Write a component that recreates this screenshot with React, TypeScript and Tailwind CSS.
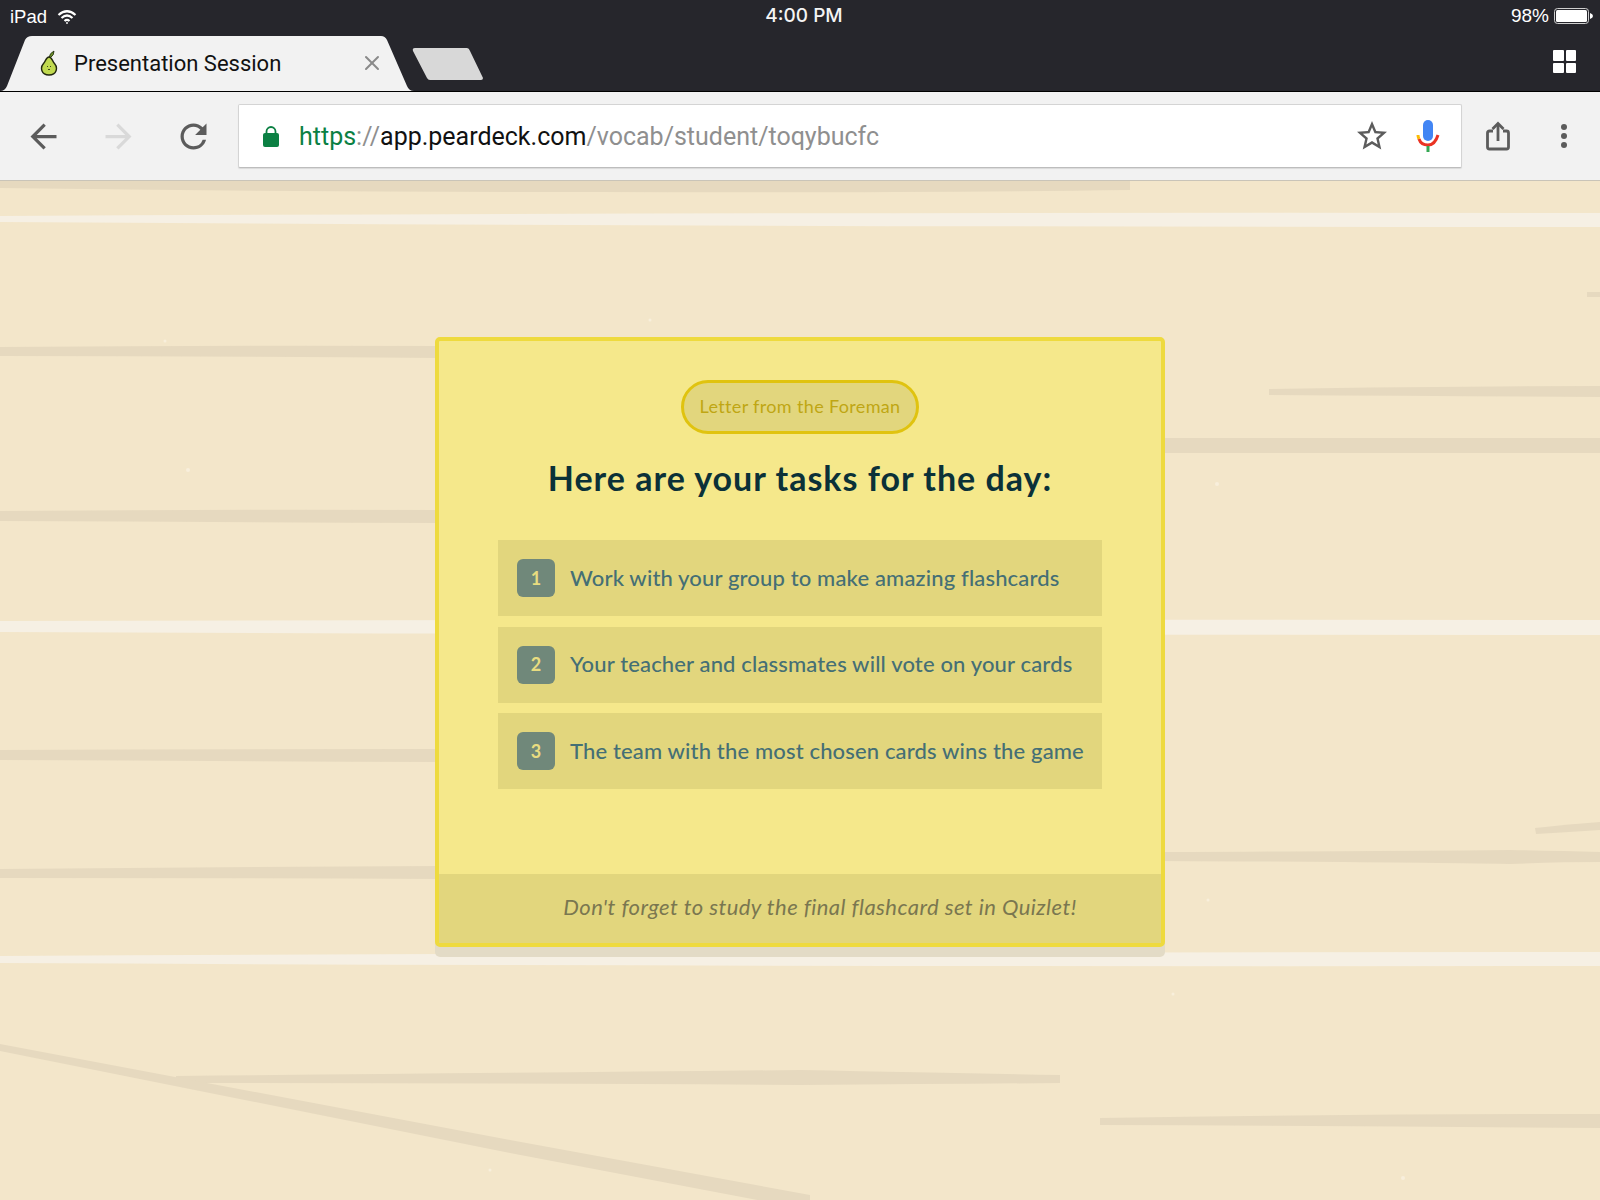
import { X } from 'lucide-react';

const tasks = [
  'Work with your group to make amazing flashcards',
  'Your teacher and classmates will vote on your cards',
  'The team with the most chosen cards wins the game',
];

function WoodBackground() {
  return (
    <svg className="absolute inset-0 w-full h-full" viewBox="0 181 1600 1019" preserveAspectRatio="none">
      {/* dark grain */}
      <g fill="#e6d9bf">
        <path d="M0 181H1130V190Q900 193 600 192Q300 192 0 188Z" />
        <path d="M0 347Q220 345 440 346V358Q220 356 0 356Z" />
        <path d="M0 511Q220 509 440 510V523Q220 522 0 521Z" />
        <path d="M0 750Q220 749 440 749V762Q220 761 0 760Z" />
        <path d="M0 869Q220 867 440 866V879Q220 878 0 878Z" />
        <path d="M1160 438H1600V453H1160Z" />
        <path d="M1269 389Q1450 386 1600 386V397Q1450 396 1269 395Z" />
        <path d="M1312 624Q1450 622 1600 623V632Q1450 632 1312 631Z" />
        <path d="M1587 292H1600V297H1587Z" />
        <path d="M1160 852Q1400 851 1510 850Q1560 851 1600 852V862Q1560 862 1510 864Q1400 862 1160 861Z" />
        <path d="M1535 828Q1570 824 1600 822V830Q1570 832 1536 834Z" />
        <path d="M176 1076Q500 1073 800 1070Q950 1073 1060 1075V1083Q950 1084 800 1085Q500 1083 176 1083Z" />
        <path d="M1100 1118Q1350 1114 1600 1114V1128Q1350 1126 1100 1125Z" />
        <path d="M0 1044L510 1140L810 1195V1210L510 1153L0 1051Z" />
      </g>
      {/* light streaks */}
      <g fill="#f6f0e4">
        <path d="M0 216Q800 212 1600 213V227Q800 227 0 222Z" />
        <path d="M0 621Q800 619 1600 620V635Q800 635 0 632Z" />
        <path d="M0 956Q800 952 1600 952V966Q800 967 0 963Z" />
      </g>
      {/* specks */}
      <g fill="#f8efdc">
        <circle cx="188" cy="470" r="2" />
        <circle cx="165" cy="341" r="1.5" />
        <circle cx="650" cy="320" r="1.5" />
        <circle cx="1217" cy="484" r="2" />
        <circle cx="1208" cy="900" r="1.5" />
        <circle cx="1173" cy="994" r="1.5" />
        <circle cx="1403" cy="1178" r="2" />
        <circle cx="490" cy="1170" r="1.5" />
      </g>
    </svg>
  );
}

function Pear() {
  return (
    <svg width="18" height="26" viewBox="0 0 18 26">
      <path d="M9 8Q9.5 3 14 1Q14.5 5 10 8Z" fill="#6b8f2a" stroke="#1f2a10" strokeWidth="0.8" />
      <path d="M9 7C12 7 12 11 14.5 13.5C18 17.5 17 25 9 25C1 25 0 17.5 3.5 13.5C6 11 6 7 9 7Z" fill="#c0d94f" stroke="#22280f" strokeWidth="1.4" />
      <path d="M7 16.5H8M10 16.5H11M8 19.5H10" stroke="#3d4a1a" strokeWidth="1" />
    </svg>
  );
}

function StatusBar() {
  return (
    <div className="flex items-center justify-between h-[33px] pl-[10px] pr-[6px] font-['Liberation_Sans',sans-serif] text-white text-[18.5px]">
      <div className="flex items-center w-[300px] gap-[10px]">
        <span>iPad</span>
        <svg width="20" height="16" viewBox="0 0 20 16" fill="none" stroke="#fff" strokeWidth="2.2">
          <path d="M1.5 6Q10 -1.5 18.5 6" />
          <path d="M4.5 9Q10 4 15.5 9" />
          <path d="M7.5 12Q10 9.8 12.5 12" />
          <circle cx="10" cy="14" r="0.9" fill="#fff" stroke="none" />
        </svg>
      </div>
      <span className="ml-[4px] font-[Inter,sans-serif] font-medium text-[19px] text-[#f4f4f4]">4:00 PM</span>
      <div className="flex items-center justify-end w-[300px] gap-[5px]">
        <span className="text-[19px]">98%</span>
        <svg width="40" height="17" viewBox="0 0 40 17">
          <rect x="0.5" y="0.5" width="34" height="15" rx="3" fill="none" stroke="#cfcfcf" />
          <rect x="2" y="2" width="31" height="12" rx="1.5" fill="#fff" />
          <path d="M36 5Q39 6 39 8Q39 10 36 11Z" fill="#fff" />
        </svg>
      </div>
    </div>
  );
}

function TabRow() {
  return (
    <div className="flex items-end h-[59px] pr-[24px] border-b border-black">
      <div className="relative flex items-center w-[414px] h-[56px] pl-[40px] pr-[30px]">
        <svg className="absolute inset-0" width="414" height="56" viewBox="0 0 414 56">
          <path d="M0 56Q5 56 7 51L25 5Q27 1 32 1H381Q385 1 387 5L407 51Q409 56 414 56Z" fill="#f2f2f2" />
        </svg>
        <div className="relative flex items-center w-full">
          <Pear />
          <span className="ml-[16px] font-[Roboto,sans-serif] text-[22px] text-[#111]">Presentation Session</span>
          <X className="ml-auto text-[#8a8a8a]" size={24} strokeWidth={2} />
        </div>
      </div>
      <svg className="mb-[11px] -ml-[2px]" width="72" height="32" viewBox="0 0 72 33" preserveAspectRatio="none">
        <path d="M3 0H55Q57 0 58 3L71 31Q71 33 69 33H18Q16 33 15 31L1 3Q0 0 3 0Z" fill="#d8d8d8" />
      </svg>
      <div className="ml-auto mb-[18px] grid grid-cols-2 gap-[2px] w-[23px] h-[23px]">
        <span className="bg-white rounded-[1px]" />
        <span className="bg-white rounded-[1px]" />
        <span className="bg-white rounded-[1px]" />
        <span className="bg-white rounded-[1px]" />
      </div>
    </div>
  );
}

function Toolbar() {
  return (
    <div className="flex items-center h-[89px] bg-[#f2f2f2] border-b border-[#c9c4b8] pl-[24px]">
      <svg width="39" height="39" viewBox="0 0 24 24" fill="#5c5c5c"><path d="M20 11H7.83l5.59-5.59L12 4l-8 8 8 8 1.41-1.41L7.83 13H20v-2z" /></svg>
      <svg className="ml-[36px]" width="39" height="39" viewBox="0 0 24 24" fill="#d9d9d9"><path d="M12 4l-1.41 1.41L16.17 11H4v2h12.17l-5.58 5.59L12 20l8-8z" /></svg>
      <svg className="ml-[36px]" width="39" height="39" viewBox="0 0 24 24" fill="#5c5c5c"><path d="M17.65 6.35A7.958 7.958 0 0 0 12 4c-4.42 0-7.99 3.58-7.99 8s3.57 8 7.99 8c3.73 0 6.84-2.55 7.73-6h-2.08A5.99 5.99 0 0 1 12 18c-3.31 0-6-2.69-6-6s2.69-6 6-6c1.66 0 3.14.69 4.22 1.78L13 11h7V4l-2.35 2.35z" /></svg>
      <div className="ml-[25px] mb-[1px] flex items-center w-[1224px] h-[64px] bg-white rounded-[2px] border border-[#d4d4d4] border-b-[#bdbdbd] pl-[23px] pr-[21px] shadow-[0_1px_1px_rgba(0,0,0,0.1)]">
        <svg width="18" height="22" viewBox="0 0 18 22">
          <path d="M4.5 9V6.5a4.5 4.5 0 0 1 9 0V9" fill="none" stroke="#0b8043" strokeWidth="1.8" />
          <rect x="1" y="8" width="16" height="14" rx="2" fill="#0b8043" />
        </svg>
        <div className="ml-[19px] pt-[2px] font-[Roboto,sans-serif] text-[25px] text-[#8f8f8f] whitespace-nowrap">
          <span className="text-[#0b8043]">https</span>://<span className="text-[#111]">app.peardeck.com</span>/vocab/student/toqybucfc
        </div>
        <svg className="ml-auto" width="36" height="36" viewBox="0 0 24 24" fill="#5c5c5c">
          <path d="M22 9.24l-7.19-.62L12 2 9.19 8.63 2 9.24l5.46 4.73L5.82 21 12 17.27 18.18 21l-1.63-7.03L22 9.24zM12 15.4l-3.76 2.27 1-4.28-3.32-2.88 4.38-.38L12 6.1l1.71 4.04 4.38.38-3.32 2.88 1 4.28L12 15.4z" />
        </svg>
        <svg className="ml-[26px]" width="24" height="34" viewBox="0 0 24 34" fill="none">
          <rect x="7" y="1" width="10" height="21" rx="5" fill="#4285f4" />
          <path d="M2 16Q2 18 3 20" stroke="#fbbc05" strokeWidth="3" />
          <path d="M3 20Q5 26 12 26Q19 26 22 16" stroke="#ea3323" strokeWidth="3" />
          <rect x="10.5" y="27" width="3" height="6" fill="#34a853" />
        </svg>
      </div>
      <svg className="ml-[24px]" width="24" height="30" viewBox="0 0 24 30" fill="none" stroke="#5c5c5c" strokeWidth="2.8">
        <path d="M7 10H3.5Q1.5 10 1.5 12V26Q1.5 28 3.5 28H20.5Q22.5 28 22.5 26V12Q22.5 10 20.5 10H17" />
        <path d="M12 20V3" />
        <path d="M6.5 8L12 2.5L17.5 8" />
      </svg>
      <div className="ml-[51px] flex flex-col gap-[3px]">
        <span className="w-[6px] h-[6px] rounded-full bg-[#5c5c5c]" />
        <span className="w-[6px] h-[6px] rounded-full bg-[#5c5c5c]" />
        <span className="w-[6px] h-[6px] rounded-full bg-[#5c5c5c]" />
      </div>
    </div>
  );
}

export default function App() {
  return (
    <div className="flex flex-col w-[1600px] h-[1200px] overflow-hidden bg-[#26262c]">
      <StatusBar />
      <TabRow />
      <Toolbar />
      <main className="relative flex-1 bg-[#f3e6ca] pt-[156px] font-[Lato,sans-serif]">
        <WoodBackground />
        <div className="relative flex flex-col mx-auto w-[730px] h-[610px] bg-[#f5e88b] border-[4px] border-[#eeda3e] rounded-[5px] shadow-[0_10px_0_#e3dbc6]">
          <div className="self-center flex items-center justify-center mt-[39px] pb-[2px] w-[238px] h-[54px] bg-[#e2d67d] border-[3px] border-[#e0c30f] rounded-full text-[18px] tracking-[0.35px] text-[#bfa614]">
            Letter from the Foreman
          </div>
          <h1 className="mt-[22px] text-center text-[34px] leading-[43px] font-bold tracking-[1px] text-[#0b3138]">Here are your tasks for the day:</h1>
          <ul className="flex flex-col gap-[10.5px] mt-[41px] mx-[59px]">
            {tasks.map((task, i) => (
              <li key={task} className="flex items-center h-[76px] pl-[19px] bg-[#e2d67d] text-[22px] tracking-[0.15px] text-[#456f75] font-medium whitespace-nowrap">
                <span className="flex items-center justify-center shrink-0 w-[38px] h-[38px] mr-[15px] rounded-[6px] bg-[#70887a] text-[#e8dc80] text-[18px] font-bold">{i + 1}</span>
                <span className="mb-[2px]">{task}</span>
              </li>
            ))}
          </ul>
          <div className="mt-auto flex items-center justify-center h-[69px] pl-[40px] pb-[5px] bg-[#e2d67d] text-[22px] tracking-[0.45px] italic text-[#7a7750]">
            Don't forget to study the final flashcard set in Quizlet!
          </div>
        </div>
      </main>
    </div>
  );
}
